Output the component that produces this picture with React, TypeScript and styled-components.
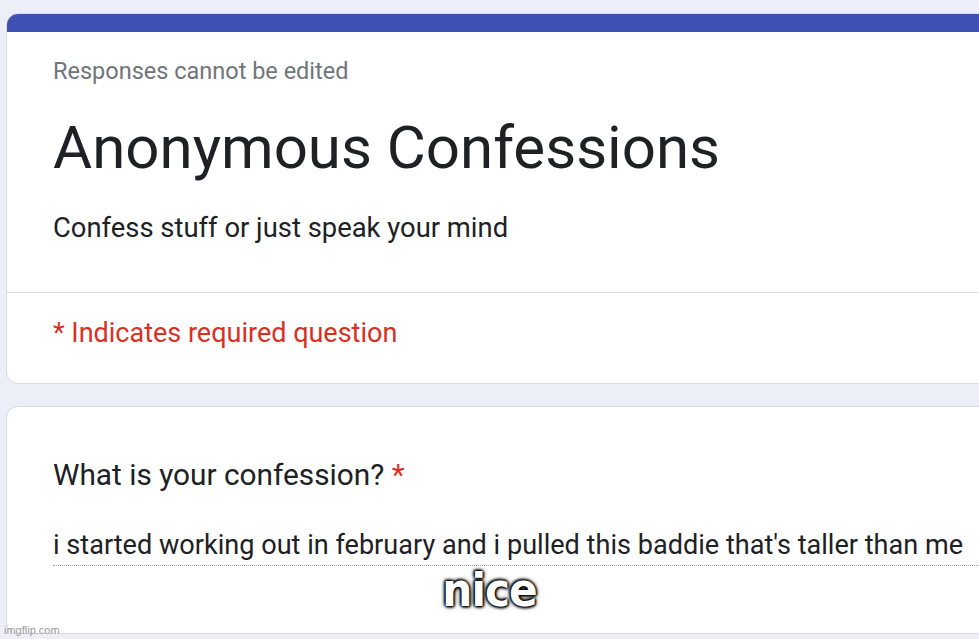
import React from 'react';
import styled, { createGlobalStyle } from 'styled-components';

const GlobalStyle = createGlobalStyle`
  html, body {
    margin: 0;
    padding: 0;
    background: #eceef8;
    overflow: hidden;
  }
  body {
    font-family: Roboto, "Noto Sans", Arial, sans-serif;
  }
`;

const Page = styled.div`
  position: relative;
  width: 979px;
  height: 639px;
  padding: 13px 0 0 6px;
  box-sizing: border-box;
  display: flex;
  flex-direction: column;
  gap: 22px;
`;

const Card = styled.section<{ $height: number }>`
  width: 1000px;
  height: ${(p) => p.$height}px;
  box-sizing: border-box;
  background: #fff;
  border: 1px solid #dadce0;
  border-radius: 12px;
  overflow: hidden;
  display: flex;
  flex-direction: column;
`;

const TopBar = styled.div`
  height: 19px;
  background: #3f51b5;
  margin: -1px -1px 0 -1px;
`;

const Header = styled.div`
  padding: 22px 0 0 46px;
  display: flex;
  flex-direction: column;
`;

const Note = styled.div`
  font-size: 23.5px;
  color: #70757a;
  line-height: 34px;
`;

const Title = styled.h1`
  margin: 27px 0 0 0;
  font-size: 60px;
  font-weight: 400;
  color: #202124;
  line-height: 66px;
  white-space: nowrap;
`;

const Description = styled.div`
  margin-top: 29px;
  font-size: 27.4px;
  color: #202124;
  line-height: 36px;
`;

const Divider = styled.div`
  height: 1px;
  background: #dadce0;
  margin-top: 46px;
`;

const Required = styled.div`
  padding: 22px 0 0 46px;
  font-size: 27px;
  color: #d93025;
  line-height: 36px;
`;

const Body = styled.div`
  padding: 50px 0 0 46px;
  display: flex;
  flex-direction: column;
`;

const Question = styled.div`
  font-size: 29.8px;
  color: #202124;
  line-height: 36px;
`;

const Star = styled.span`
  color: #d93025;
`;

const Answer = styled.div`
  margin-top: 34px;
  font-size: 27.1px;
  color: #202124;
  line-height: 36px;
  padding-bottom: 2px;
  white-space: nowrap;
  border-bottom: 1px dotted #9aa0a6;
`;

const Caption = styled.div`
  position: absolute;
  left: 0;
  right: 0;
  top: 562px;
  text-align: center;
  font-family: Impact, "DejaVu Sans Condensed", "Liberation Sans Narrow", sans-serif;
  font-weight: 700;
  font-size: 47px;
  letter-spacing: -1px;
  color: #fff;
  text-shadow: 0 0 2px #000, 0 0 3px #000, 1px 1px 3px #000, -1px -1px 3px #000, 0 0 5px #000;
`;

const Watermark = styled.div`
  position: absolute;
  left: 4px;
  bottom: 3px;
  font-family: "Liberation Sans", Arial, sans-serif;
  font-size: 11px;
  color: #9a9a9a;
`;

export default function App() {
  return (
    <>
      <GlobalStyle />
      <Page>
        <Card $height={371}>
          <TopBar />
          <Header>
            <Note>Responses cannot be edited</Note>
            <Title>Anonymous Confessions</Title>
            <Description>Confess stuff or just speak your mind</Description>
          </Header>
          <Divider />
          <Required>* Indicates required question</Required>
        </Card>
        <Card $height={228}>
          <Body>
            <Question>
              What is your confession? <Star>*</Star>
            </Question>
            <Answer>i started working out in february and i pulled this baddie that's taller than me</Answer>
          </Body>
        </Card>
        <Caption>nice</Caption>
        <Watermark>imgflip.com</Watermark>
      </Page>
    </>
  );
}
